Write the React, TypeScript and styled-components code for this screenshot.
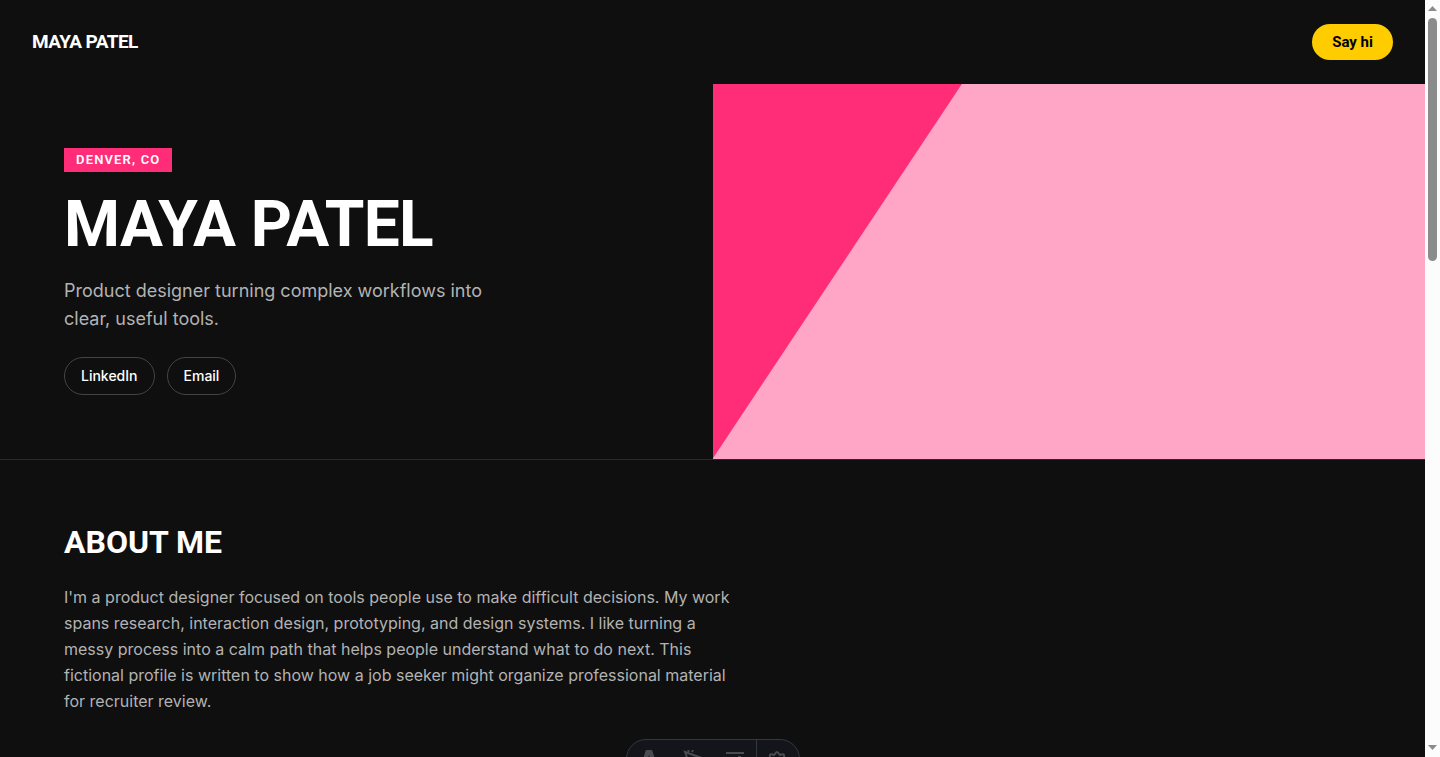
import React from "react";
import styled, { createGlobalStyle } from "styled-components";

const display = 'Roboto, "Liberation Sans", sans-serif';

const GlobalStyle = createGlobalStyle`
  *, *::before, *::after { box-sizing: border-box; }
  body {
    margin: 0;
    background: #0f0f0f;
    color: #ffffff;
    font-family: Inter, "Liberation Sans", sans-serif;
  }
  h1, h2, p { margin: 0; }
`;

const Frame = styled.div`
  display: grid;
  grid-template-columns: minmax(0, 1fr) 15px;
  height: 100vh;
  overflow: hidden;
`;

const Page = styled.div`
  height: 100vh;
  overflow: hidden;
`;

const Header = styled.header`
  display: flex;
  align-items: center;
  justify-content: space-between;
  padding: 24px 32px;
`;

const Brand = styled.a`
  color: #ffffff;
  font-family: ${display};
  font-size: 19px;
  line-height: 28px;
  font-weight: 700;
  letter-spacing: -0.03em;
  text-decoration: none;
`;

const ContactButton = styled.button`
  height: 36px;
  padding: 0 20px;
  border: 0;
  border-radius: 18px;
  background: #ffcc00;
  color: #000000;
  font-family: ${display};
  font-size: 15px;
  line-height: 20px;
  font-weight: 700;
  cursor: pointer;
`;

const Hero = styled.section`
  display: grid;
  grid-template-columns: 1fr 1fr;
  border-bottom: 1px solid #2a2a2a;
`;

const Intro = styled.div`
  display: flex;
  flex-direction: column;
  align-items: flex-start;
  gap: 24px;
  padding: 64px;
`;

const Badge = styled.span`
  padding: 4px 12px;
  background: #ff2d78;
  font-family: ${display};
  font-size: 13px;
  line-height: 16px;
  font-weight: 600;
  letter-spacing: 0.09em;
`;

const Title = styled.h1`
  font-family: ${display};
  font-size: 64px;
  line-height: 57px;
  font-weight: 700;
  letter-spacing: -0.01em;
`;

const Tagline = styled.p`
  max-width: 448px;
  color: #b3b3b3;
  font-size: 18px;
  line-height: 28px;
`;

const LinkRow = styled.nav`
  display: flex;
  gap: 12px;
`;

const PillLink = styled.a`
  padding: 8px 16px;
  border: 1px solid #444444;
  border-radius: 19px;
  color: #ffffff;
  font-size: 14px;
  line-height: 20px;
  font-weight: 500;
  text-decoration: none;
`;

const Artwork = styled.div`
  display: grid;
  background: #ff2d78;

  &::before {
    content: "";
    background: #ffa6c6;
    clip-path: polygon(35% 0, 100% 0, 100% 100%, 0 100%);
  }
`;

const About = styled.section`
  display: flex;
  flex-direction: column;
  gap: 24px;
  padding: 64px;
`;

const SectionTitle = styled.h2`
  font-family: ${display};
  font-size: 32px;
  line-height: 36px;
  font-weight: 700;
`;

const Bio = styled.p`
  max-width: 672px;
  color: #b3b3b3;
  font-size: 16px;
  line-height: 26px;
`;

const Dock = styled.div`
  position: fixed;
  bottom: -22px;
  left: calc(50% - 7px);
  transform: translateX(-50%);
  display: flex;
  width: 174px;
  height: 40px;
  overflow: hidden;
  border: 1px solid #343841;
  border-radius: 20px;
  background: #13151a;
`;

const DockButton = styled.button<{ $divided?: boolean }>`
  flex: ${(p) => (p.$divided ? "0 0 43px" : "1 1 0")};
  display: flex;
  justify-content: center;
  padding: ${(p) => (p.$divided ? "10px 2px 0 0" : "10px 0 0")};
  border: 0;
  border-left: ${(p) => (p.$divided ? "1px solid #343841" : "0")};
  background: none;
  color: #4a4c52;
`;

const ScrollTrack = styled.div`
  display: flex;
  flex-direction: column;
  align-items: center;
  padding: 6px 0 7px;
  background: #fcfcfc;
`;

const ScrollThumb = styled.div`
  width: 9px;
  height: 243px;
  margin: 7px 0 auto;
  border-radius: 5px;
  background: #8b8b8b;
`;

const Arrow = ({ down }: { down?: boolean }) => (
  <svg width="9" height="5" viewBox="0 0 9 5" fill="#8b8b8b" aria-hidden="true">
    <path d={down ? "M0 0h9L4.500 5z" : "M0 5h9L4.500 0z"} />
  </svg>
);

export default function App() {
  return (
    <Frame>
      <GlobalStyle />
      <Page>
        <Header>
          <Brand href="#top">MAYA PATEL</Brand>
          <ContactButton type="button">Say hi</ContactButton>
        </Header>
        <main>
          <Hero>
            <Intro>
              <Badge>DENVER, CO</Badge>
              <Title>MAYA PATEL</Title>
              <Tagline>Product designer turning complex workflows into clear, useful tools.</Tagline>
              <LinkRow aria-label="Contact links">
                <PillLink href="#linkedin">LinkedIn</PillLink>
                <PillLink href="#email">Email</PillLink>
              </LinkRow>
            </Intro>
            <Artwork />
          </Hero>
          <About>
            <SectionTitle>ABOUT ME</SectionTitle>
            <Bio>
              I'm a product designer focused on tools people use to make difficult decisions. My work
              spans research, interaction design, prototyping, and design systems. I like turning a
              messy process into a calm path that helps people understand what to do next. This
              fictional profile is written to show how a job seeker might organize professional
              material for recruiter review.
            </Bio>
          </About>
        </main>
      </Page>
      <ScrollTrack aria-hidden="true">
        <Arrow />
        <ScrollThumb />
        <Arrow down />
      </ScrollTrack>
      <Dock role="toolbar" aria-label="Page tools">
        <DockButton type="button" aria-label="Home">
          <svg width="20" height="20" viewBox="0 0 20 20" fill="currentColor">
            <path d="M8 0h4q1 0 1.500 1L18 16q-3-1-5-1L10 5 7 15q-2 0-5 1L6.500 1Q7 0 8 0z" />
          </svg>
        </DockButton>
        <DockButton type="button" aria-label="Inspect">
          <svg width="20" height="20" viewBox="0 0 20 20" fill="none" stroke="currentColor" strokeWidth="2">
            <path d="M17 7 3 2l5 14 3-6z" />
            <path d="M6 0l1 2M11 0l-1 2" />
          </svg>
        </DockButton>
        <DockButton type="button" aria-label="Audit">
          <svg width="20" height="20" viewBox="0 0 20 20" fill="currentColor">
            <path d="M1 2h18v2H1zM1 9h18v2H1zM13 6h3v2h-3z" />
          </svg>
        </DockButton>
        <DockButton type="button" aria-label="Settings" $divided>
          <svg width="20" height="20" viewBox="0 0 20 20" fill="none" stroke="currentColor" strokeWidth="2">
            <path d="M8 4q2-4 4 0l1 1q5-2 4 2l1 3 1 2-2 2v4H3v-4l-2-2 1-2 1-3q-1-4 4-2z" />
            <circle cx="10" cy="11" r="3" />
          </svg>
        </DockButton>
      </Dock>
    </Frame>
  );
}
